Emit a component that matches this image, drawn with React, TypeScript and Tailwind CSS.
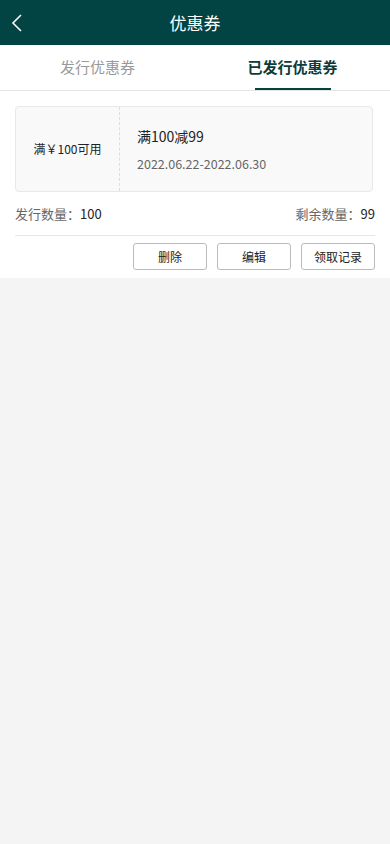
import React from "react";

export default function App() {
  return (
    <div
      className="w-[390px] min-h-[844px] bg-[#f4f4f4] flex flex-col"
      style={{ fontFamily: '"Noto Sans CJK SC", "Noto Sans", sans-serif' }}
    >
      <div className="h-[45px] bg-[#024444] flex items-center relative">
        <svg
          className="absolute left-[10px] top-[13px]"
          width="14"
          height="20"
          viewBox="0 0 14 20"
          fill="none"
        >
          <path d="M11 2 L3 10 L11 18" stroke="#fff" strokeWidth="1.6" />
        </svg>
        <div className="flex-1 text-center text-white text-[17px]">优惠券</div>
      </div>
      <div className="bg-white h-[46px] flex border-b border-[#e6e6e6]">
        <div className="flex-1 flex items-center justify-center text-[15px] text-[#999]">
          发行优惠券
        </div>
        <div className="flex-1 flex items-center justify-center relative text-[15px] text-[#0d3b3b] font-bold">
          已发行优惠券
          <div className="absolute bottom-0 left-[60px] w-[76px] h-[2px] bg-[#024444]" />
        </div>
      </div>
      <div className="bg-white px-[15px] pt-[15px] pb-[8px]">
        <div className="w-[358px] h-[86px] rounded-[4px] border border-[#e8e8e8] bg-[#f9f9f9] flex">
          <div className="w-[104px] border-r border-dashed border-[#dddddd] flex items-center justify-center text-[12px] text-[#222]">
            满￥100可用
          </div>
          <div className="flex-1 pl-[17px] flex flex-col pt-[19px]">
            <div className="text-[14px] text-[#222] leading-[20px]">满100减99</div>
            <div className="text-[12.5px] text-[#666] leading-[16px] mt-[10px]">
              2022.06.22-2022.06.30
            </div>
          </div>
        </div>
        <div className="flex justify-between mt-[13px] text-[13px] text-[#666] leading-[18px]">
          <div>
            发行数量：<span className="text-[#222]">100</span>
          </div>
          <div>
            剩余数量：<span className="text-[#222]">99</span>
          </div>
        </div>
        <div className="h-px bg-[#e6e6e6] mt-[12px]" />
        <div className="flex justify-end gap-[10px] mt-[7px]">
          <button className="w-[74px] h-[27px] border border-[#bbb] rounded-[3px] text-[12px] text-[#222] bg-white">
            删除
          </button>
          <button className="w-[74px] h-[27px] border border-[#bbb] rounded-[3px] text-[12px] text-[#222] bg-white">
            编辑
          </button>
          <button className="w-[74px] h-[27px] border border-[#bbb] rounded-[3px] text-[12px] text-[#222] bg-white">
            领取记录
          </button>
        </div>
      </div>
    </div>
  );
}
